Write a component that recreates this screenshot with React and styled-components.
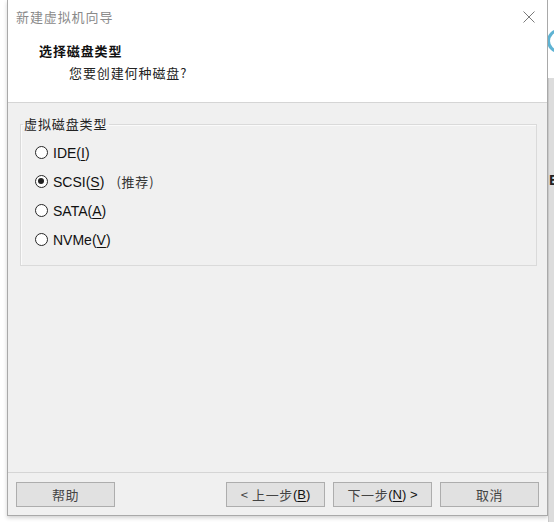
import React from 'react'
import styled, { createGlobalStyle } from 'styled-components'

const GlobalStyle = createGlobalStyle`
  html, body {
    margin: 0;
    padding: 0;
    background: #ffffff;
  }
  body {
    font-family: "Noto Sans CJK SC", "Liberation Sans", sans-serif;
    font-size: 13px;
    color: #1a1a1a;
  }
`

const Screen = styled.div`
  display: flex;
  align-items: flex-start;
  width: 554px;
  height: 522px;
  padding-left: 7px;
  box-sizing: border-box;
  overflow: hidden;
`

const Dialog = styled.div`
  display: flex;
  flex-direction: column;
  width: 541px;
  height: 516px;
  box-sizing: border-box;
  border: 1px solid #a9a9a9;
  border-top: none;
  background: #f0f0f0;
  box-shadow: 0 2px 4px rgba(0, 0, 0, 0.18);
  flex-shrink: 0;
`

const TitleBar = styled.div`
  display: flex;
  align-items: center;
  justify-content: space-between;
  height: 33px;
  padding: 0 12px 0 8px;
  background: #ffffff;
`

const Title = styled.span`
  color: #8a8a8a;
  font-size: 13px;
  letter-spacing: 0.9px;
  line-height: 16px;
`

const Header = styled.div`
  height: 70px;
  padding: 10px 0 0 31px;
  box-sizing: border-box;
  background: #ffffff;
  border-bottom: 1px solid #d5d5d5;
`

const Heading = styled.div`
  font-weight: 700;
  font-size: 13px;
  letter-spacing: 0.9px;
  line-height: 16px;
  color: #111;
`

const SubHeading = styled.div`
  margin: 6px 0 0 30px;
  font-size: 13px;
  letter-spacing: 0.9px;
  line-height: 16px;
  color: #222;
`

const Body = styled.div`
  flex: 1;
  padding: 13px 10px 0 12px;
`

const Group = styled.fieldset`
  margin: 0;
  padding: 6px 0 11px 0;
  min-width: 0;
  border: 1px solid #dadada;
  box-shadow: inset 1px 1px 0 #fafafa;
`

const Legend = styled.legend`
  margin-left: 2px;
  padding: 0 2px 0 1px;
  font-size: 13px;
  letter-spacing: 0.9px;
  line-height: 16px;
  color: #222;
`

const Option = styled.label`
  display: flex;
  align-items: center;
  height: 29px;
  padding-left: 14px;
  font-family: "Liberation Sans", "Noto Sans CJK SC", sans-serif;
  font-size: 14px;
  color: #111;
`

const Radio = styled.span`
  position: relative;
  width: 13px;
  height: 13px;
  box-sizing: border-box;
  border: 1.3px solid #262626;
  border-radius: 50%;
  background: #fff;
  margin-right: 5px;
  flex-shrink: 0;
  &::after {
    content: '';
    display: ${(p) => (p.$checked ? 'block' : 'none')};
    position: absolute;
    left: 2.2px;
    top: 2.2px;
    width: 6px;
    height: 6px;
    border-radius: 50%;
    background: #222;
  }
`

const Key = styled.span`
  text-decoration: underline;
  text-underline-offset: 2px;
`

const Note = styled.span`
  margin-left: 12px;
  font-family: "Noto Sans CJK SC", sans-serif;
  font-size: 13px;
  letter-spacing: 0.8px;
  color: #333;
`

const Footer = styled.div`
  display: flex;
  justify-content: space-between;
  padding: 9px 8px 8px 8px;
  border-top: 1px solid #d5d5d5;
`

const ButtonGroup = styled.div`
  display: flex;
  gap: 8px;
`

const Button = styled.button`
  width: 99px;
  height: 25px;
  padding: 0;
  box-sizing: border-box;
  border: 1px solid #adadad;
  background: #e1e1e1;
  font-family: "Noto Sans CJK SC", "Liberation Sans", sans-serif;
  font-size: 13px;
  letter-spacing: 0.6px;
  color: #444;
  display: flex;
  align-items: center;
  justify-content: center;
`

const Accel = styled.span`
  font-family: "Liberation Sans", sans-serif;
  color: #111;
  letter-spacing: 0;
`

const Side = styled.div`
  display: flex;
  flex-direction: column;
  flex: 1;
  height: 522px;
  overflow: hidden;
`

const SideTop = styled.div`
  height: 78px;
  background: #ffffff;
  padding-top: 29px;
  box-sizing: border-box;
  margin-left: -1px;
`

const SideLower = styled.div`
  flex: 1;
  background: #dcdcdc;
  border-left: 1px solid #c8c8c8;
  padding-top: 94px;
  font-family: "Liberation Sans", sans-serif;
  font-weight: 700;
  font-size: 15px;
  color: #222;
  line-height: 16px;
`

const CloseIcon = () => (
  <svg width="12" height="12" viewBox="0 0 12 12">
    <path d="M0.5 0.5 L11.5 11.5 M11.5 0.5 L0.5 11.5" stroke="#7a7a7a" strokeWidth="1" fill="none" />
  </svg>
)

const options = [
  { label: 'IDE', key: 'I' },
  { label: 'SCSI', key: 'S', checked: true, note: '(推荐)' },
  { label: 'SATA', key: 'A' },
  { label: 'NVMe', key: 'V' },
]

const App = () => (
  <>
    <GlobalStyle />
    <Screen>
      <Dialog>
        <TitleBar>
          <Title>新建虚拟机向导</Title>
          <CloseIcon />
        </TitleBar>
        <Header>
          <Heading>选择磁盘类型</Heading>
          <SubHeading>您要创建何种磁盘?</SubHeading>
        </Header>
        <Body>
          <Group>
            <Legend>虚拟磁盘类型</Legend>
            {options.map((o) => (
              <Option key={o.label}>
                <Radio $checked={o.checked} />
                {o.label}(<Key>{o.key}</Key>)
                {o.note && <Note>{o.note}</Note>}
              </Option>
            ))}
          </Group>
        </Body>
        <Footer>
          <Button>帮助</Button>
          <ButtonGroup>
            <Button>
              &lt; 上一步<Accel>(<Key>B</Key>)</Accel>
            </Button>
            <Button>
              下一步<Accel>(<Key>N</Key>) &gt;</Accel>
            </Button>
            <Button>取消</Button>
          </ButtonGroup>
        </Footer>
      </Dialog>
      <Side>
        <SideTop>
          <svg width="24" height="24" viewBox="0 0 24 24">
            <circle cx="12" cy="12" r="10.5" stroke="#5fb3d3" strokeWidth="3" fill="none" />
          </svg>
        </SideTop>
        <SideLower>E</SideLower>
      </Side>
    </Screen>
  </>
)

export default App
